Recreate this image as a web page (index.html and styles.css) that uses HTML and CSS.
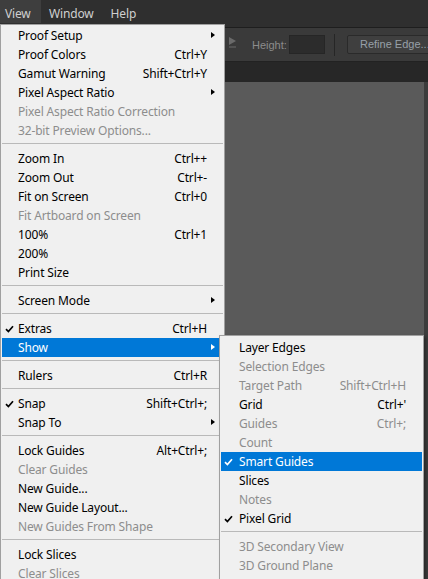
FILE: index.html
```html
<!DOCTYPE html>
<html>
<head>
<meta charset="utf-8">
<link rel="stylesheet" href="styles.css">
</head>
<body>
<div class="app">
  <div class="menubar">
    <span class="mb-item active">View</span>
    <span class="mb-item">Window</span>
    <span class="mb-item">Help</span>
  </div>
  <div class="toolbar">
    <svg class="tb-icon" width="10" height="12" viewBox="0 0 10 12"><path d="M1 1 L8 5 L1 9 Z" fill="#6a6a6a"/><path d="M1 11 H8" stroke="#6a6a6a" stroke-width="1"/></svg>
    <span class="tb-label">Height:</span>
    <span class="tb-input"></span>
    <span class="tb-sep"></span>
    <span class="tb-button">Refine Edge...</span>
  </div>
  <div class="doctabs"></div>
  <div class="workspace">
    <div class="canvas"></div>
    <div class="sidepanel"></div>
  </div>
</div>

<div class="menu main-menu">
  <div class="row"><span class="label">Proof Setup</span><span class="arrow"></span></div>
  <div class="row"><span class="label">Proof Colors</span><span class="key">Ctrl+Y</span></div>
  <div class="row"><span class="label">Gamut Warning</span><span class="key">Shift+Ctrl+Y</span></div>
  <div class="row"><span class="label">Pixel Aspect Ratio</span><span class="arrow"></span></div>
  <div class="row off"><span class="label">Pixel Aspect Ratio Correction</span></div>
  <div class="row off"><span class="label">32-bit Preview Options...</span></div>
  <div class="sep"></div>
  <div class="row"><span class="label">Zoom In</span><span class="key">Ctrl++</span></div>
  <div class="row"><span class="label">Zoom Out</span><span class="key">Ctrl+-</span></div>
  <div class="row"><span class="label">Fit on Screen</span><span class="key">Ctrl+0</span></div>
  <div class="row off"><span class="label">Fit Artboard on Screen</span></div>
  <div class="row"><span class="label">100%</span><span class="key">Ctrl+1</span></div>
  <div class="row"><span class="label">200%</span></div>
  <div class="row"><span class="label">Print Size</span></div>
  <div class="sep"></div>
  <div class="row"><span class="label">Screen Mode</span><span class="arrow"></span></div>
  <div class="sep"></div>
  <div class="row"><svg class="check" width="9" height="8" viewBox="0 0 9 8"><path d="M1 4.2 L3.4 6.6 L8 1.2" fill="none" stroke="currentColor" stroke-width="1.7"/></svg><span class="label">Extras</span><span class="key">Ctrl+H</span></div>
  <div class="row hl"><span class="label">Show</span><span class="arrow"></span></div>
  <div class="sep"></div>
  <div class="row"><span class="label">Rulers</span><span class="key">Ctrl+R</span></div>
  <div class="sep"></div>
  <div class="row"><svg class="check" width="9" height="8" viewBox="0 0 9 8"><path d="M1 4.2 L3.4 6.6 L8 1.2" fill="none" stroke="currentColor" stroke-width="1.7"/></svg><span class="label">Snap</span><span class="key">Shift+Ctrl+;</span></div>
  <div class="row"><span class="label">Snap To</span><span class="arrow"></span></div>
  <div class="sep"></div>
  <div class="row"><span class="label">Lock Guides</span><span class="key">Alt+Ctrl+;</span></div>
  <div class="row off"><span class="label">Clear Guides</span></div>
  <div class="row"><span class="label">New Guide...</span></div>
  <div class="row"><span class="label">New Guide Layout...</span></div>
  <div class="row off"><span class="label">New Guides From Shape</span></div>
  <div class="sep"></div>
  <div class="row"><span class="label">Lock Slices</span></div>
  <div class="row off"><span class="label">Clear Slices</span></div>
</div>

<div class="menu sub-menu">
  <div class="row"><span class="label">Layer Edges</span></div>
  <div class="row off"><span class="label">Selection Edges</span></div>
  <div class="row off"><span class="label">Target Path</span><span class="key">Shift+Ctrl+H</span></div>
  <div class="row"><span class="label">Grid</span><span class="key">Ctrl+'</span></div>
  <div class="row off"><span class="label">Guides</span><span class="key">Ctrl+;</span></div>
  <div class="row off"><span class="label">Count</span></div>
  <div class="row hl"><svg class="check" width="9" height="8" viewBox="0 0 9 8"><path d="M1 4.2 L3.4 6.6 L8 1.2" fill="none" stroke="currentColor" stroke-width="1.7"/></svg><span class="label">Smart Guides</span></div>
  <div class="row"><span class="label">Slices</span></div>
  <div class="row off"><span class="label">Notes</span></div>
  <div class="row"><svg class="check" width="9" height="8" viewBox="0 0 9 8"><path d="M1 4.2 L3.4 6.6 L8 1.2" fill="none" stroke="currentColor" stroke-width="1.7"/></svg><span class="label">Pixel Grid</span></div>
  <div class="sep"></div>
  <div class="row off"><span class="label">3D Secondary View</span></div>
  <div class="row off"><span class="label">3D Ground Plane</span></div>
</div>
</body>
</html>
```
FILE: styles.css
```css
html, body {
  margin: 0;
  padding: 0;
  height: 100%;
  overflow: hidden;
}
body {
  font-family: "Noto Sans", "Liberation Sans", sans-serif;
  font-size: 12px;
  letter-spacing: -0.15px;
  background: #595959;
  position: relative;
}
.app {
  display: flex;
  flex-direction: column;
  height: 100%;
}
.menubar {
  height: 28px;
  box-sizing: border-box;
  background: #2f2f2f;
  display: flex;
  align-items: flex-start;
  border-bottom: 1px solid #1e1e1e;
}
.mb-item {
  color: #cfcfcf;
  font-size: 12px;
  height: 23px;
  line-height: 21px;
  padding: 3px 0 0 0;
  box-sizing: border-box;
  flex-shrink: 0;
}
.mb-item.active {
  background: #3e3e3e;
  width: 41px;
  padding-left: 5px;
  margin-right: 8px;
}
.mb-item + .mb-item + .mb-item {
  margin-left: 17px;
}
.toolbar {
  height: 34px;
  box-sizing: border-box;
  background: #3a3a3a;
  border-bottom: 1px solid #222;
  display: flex;
  align-items: center;
  padding-left: 228px;
  font-family: "Liberation Sans", sans-serif;
  letter-spacing: 0;
}
.toolbar > * {
  flex-shrink: 0;
}
.tb-icon {
  margin-top: -6px;
}
.tb-label {
  color: #8c8c8c;
  font-size: 11px;
  margin-left: 14px;
  width: 37px;
}
.tb-input {
  width: 34px;
  height: 17px;
  background: #2c2c2c;
  border: 1px solid #262626;
}
.tb-sep {
  width: 1px;
  height: 22px;
  background: #262626;
  margin-left: 9px;
}
.tb-button {
  margin-left: 12px;
  height: 17px;
  line-height: 17px;
  padding: 0 10px 0 12px;
  border: 1px solid #2a2a2a;
  border-radius: 2px;
  background: #3f3f3f;
  color: #97a0a8;
  font-size: 11px;
  white-space: nowrap;
}
.doctabs {
  height: 20px;
  background: #272727;
}
.workspace {
  flex: 1;
  display: flex;
}
.canvas {
  flex: 1;
  background: #5a5a5a;
}
.sidepanel {
  width: 4px;
  background: #3c3c3c;
}

.menu {
  position: absolute;
  background: #f0f0f0;
  border: 1px solid #a0a0a0;
  padding: 1px;
  box-sizing: border-box;
  color: #000;
}
.main-menu {
  left: 0;
  top: 24px;
  width: 225px;
  height: 600px;
}
.sub-menu {
  left: 219px;
  top: 335px;
  width: 205px;
  height: 260px;
  padding-top: 2px;
  box-shadow: 2px 2px 3px rgba(0,0,0,0.35);
}
.row {
  position: relative;
  height: 19px;
  display: flex;
  align-items: center;
  padding-left: 16px;
  padding-right: 16px;
  white-space: nowrap;
}
.sub-menu .row {
  padding-left: 18px;
  padding-right: 16px;
}
.label {
  flex: 1;
}
.key {
  text-align: right;
}
.off {
  color: #8d8d8d;
}
.hl {
  background: #0078d7;
  color: #fff;
}
.arrow {
  position: absolute;
  right: 8px;
  top: 6px;
  width: 0;
  height: 0;
  border-top: 3.5px solid transparent;
  border-bottom: 3.5px solid transparent;
  border-left: 4px solid #000;
}
.hl .arrow {
  border-left-color: #fff;
}
.check {
  position: absolute;
  left: 3px;
  top: 6px;
}
.sep {
  height: 1px;
  background: #b9b9b9;
  margin: 3px 0 5px 0;
}
```
